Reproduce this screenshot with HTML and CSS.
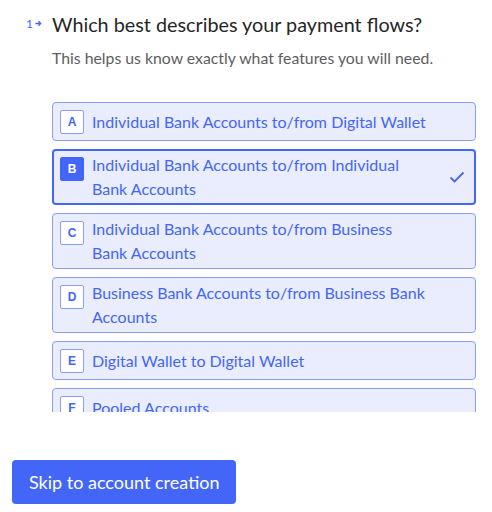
FILE: index.html
```html
<!DOCTYPE html>
<html>
<head>
<meta charset="utf-8">
<link rel="stylesheet" href="styles.css">
</head>
<body>
<div class="scroller">
  <div class="question">
    <div class="q-num">1<svg width="7" height="7" viewBox="0 0 7 7"><path d="M0.5 3.5H5.5M3.5 1.3L5.7 3.5L3.5 5.7" fill="none" stroke="#4366f9" stroke-width="1.3"/></svg></div>
    <div class="q-body">
      <h1 class="q-title">Which best describes your payment flows?</h1>
      <p class="q-sub">This helps us know exactly what features you will need.</p>
      <div class="options">
        <div class="option"><span class="key">A</span><span class="label">Individual Bank Accounts to/from Digital Wallet</span></div>
        <div class="option selected"><span class="key">B</span><span class="label">Individual Bank Accounts to/from Individual Bank Accounts</span><svg class="check" width="16" height="12" viewBox="0 0 16 12"><path d="M1.5 6.5L5.5 10.5L14.5 1.5" fill="none" stroke="#4366f9" stroke-width="1.8"/></svg></div>
        <div class="option"><span class="key">C</span><span class="label">Individual Bank Accounts to/from Business Bank Accounts</span></div>
        <div class="option"><span class="key">D</span><span class="label">Business Bank Accounts to/from Business Bank Accounts</span></div>
        <div class="option"><span class="key">E</span><span class="label">Digital Wallet to Digital Wallet</span></div>
        <div class="option"><span class="key">F</span><span class="label">Pooled Accounts</span></div>
      </div>
    </div>
  </div>
</div>
<div class="footer">
  <button class="skip">Skip to account creation</button>
</div>
</body>
</html>
```
FILE: styles.css
```css
* { box-sizing: border-box; }
body {
  margin: 0;
  background: #fff;
  font-family: Lato, "Noto Sans", sans-serif;
}
.scroller {
  height: 412px;
  overflow: hidden;
}
.question {
  display: flex;
  padding: 10px 16px 0 26px;
}
.q-num {
  width: 26px;
  flex: none;
  color: #4366f9;
  font-size: 12px;
  line-height: 28px;
  display: flex;
  align-items: center;
  gap: 2px;
  height: 28px;
  padding-bottom: 1px;
}
.q-body {
  flex: 1;
  min-width: 0;
}
.q-title {
  margin: 0;
  font-size: 19.8px;
  line-height: 28px;
  font-weight: 400;
  color: #262627;
}
.q-sub {
  margin: 8px 0 0;
  font-size: 15.8px;
  line-height: 24px;
  color: #5e5e5e;
}
.options {
  margin-top: 32px;
  display: flex;
  flex-direction: column;
  gap: 8px;
  width: 424px;
}
.option {
  display: flex;
  align-items: flex-start;
  gap: 8px;
  padding: 3px 10px 3px 7px;
  background: #eaedfd;
  border: 1px solid #8b9df9;
  border-radius: 4px;
  color: #4366f9;
}
.option.selected {
  border: 2px solid #4366f9;
  padding: 2px 9px 2px 6px;
}
.key {
  flex: none;
  width: 24px;
  height: 24px;
  margin: 4px 0 3px;
  background: #fff;
  border: 1px solid #8b9df9;
  border-radius: 2px;
  display: flex;
  align-items: center;
  justify-content: center;
  font-family: "Liberation Sans", Arial, sans-serif;
  font-weight: 700;
  font-size: 12px;
  color: #4366f9;
}
.selected .key {
  background: #4366f9;
  border-color: #4366f9;
  color: #fff;
}
.label {
  flex: 0 1 337px;
  align-self: center;
  font-size: 16px;
  line-height: 24px;
}
.check {
  flex: none;
  align-self: center;
  margin-left: auto;
}
.footer {
  padding: 48px 0 0 12px;
}
.skip {
  height: 44px;
  padding: 0 17px;
  border: none;
  border-radius: 4px;
  background: #4366f9;
  color: #fff;
  font-family: Lato, "Noto Sans", sans-serif;
  font-size: 18px;
}
```
